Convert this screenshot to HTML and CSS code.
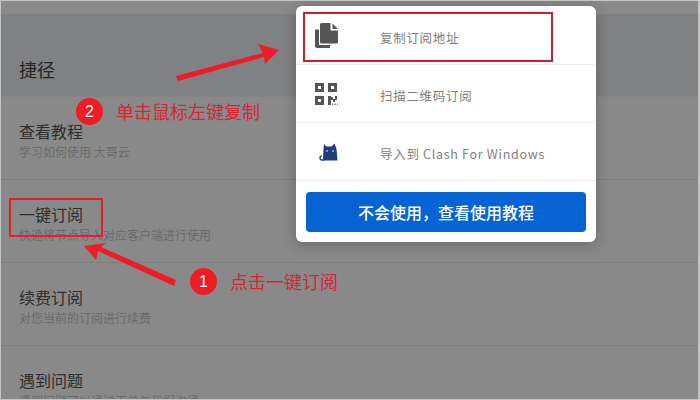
FILE: index.html
```html
<!doctype html>
<html>
  <head>
    <meta charset="utf-8">
    <meta name="viewport" content="width=device-width, user-scalable=no">
    <title>一键订阅</title>
    <link rel="stylesheet" href="styles.css">
  </head>
  <body>
    <div class="page">

      <div class="strip"></div>

      <div class="head">
        <h2 class="head-title">捷径</h2>
      </div>

      <div class="row">
        <p class="row-title">查看教程</p>
        <p class="row-sub">学习如何使用 大哥云</p>
      </div>
      <div class="row">
        <p class="row-title">一键订阅</p>
        <p class="row-sub">快速将节点导入对应客户端进行使用</p>
      </div>
      <div class="row">
        <p class="row-title">续费订阅</p>
        <p class="row-sub">对您当前的订阅进行续费</p>
      </div>
      <div class="row">
        <p class="row-title">遇到问题</p>
        <p class="row-sub">遇到问题可以通过工单与我们沟通</p>
      </div>

      <!-- subscribe popup -->
      <div class="popup">
        <div class="item">
          <span class="item-icon">
            <svg width="23" height="25" viewBox="0 0 23 25">
              <path fill="#555" d="M0 6.5 L4 6.5 L4 22 L15 22 L15 25 L2 25 Q0 25 0 23 Z"/>
              <path fill="#555" d="M6.5 0 L15.5 0 L15.5 7.5 L23 7.5 L23 19 Q23 20.5 21.5 20.5 L6.5 20.5 Q5 20.5 5 19 L5 1.5 Q5 0 6.5 0 Z"/>
              <path fill="#555" d="M17.5 0.5 L23 6 L17.5 6 Z"/>
            </svg>
          </span>
          <span class="item-text">复制订阅地址</span>
        </div>
        <div class="item">
          <span class="item-icon">
            <svg width="23" height="22" viewBox="0 0 23 22">
              <path fill="#555" fill-rule="evenodd" d="M0 0 H9 V9 H0 Z M3 3 V6 H6 V3 Z"/>
              <path fill="#555" fill-rule="evenodd" d="M13 0 H22 V9 H13 Z M16 3 V6 H19 V3 Z"/>
              <path fill="#555" fill-rule="evenodd" d="M0 13 H9 V22 H0 Z M3 16 V19 H6 V16 Z"/>
              <path fill="#555" d="M13 13 H16 V22 H13 Z M16 14 H18 V17 H16 Z M18 16 H20 V19 H18 Z M20 13 H22 V17 H20 Z"/>
              <path fill="#888" d="M17 20.5 H18.500 V22 H17 Z M19.500 20.500 H21 V22 H19.500 Z M22 20.500 H23 V22 H22 Z"/>
            </svg>
          </span>
          <span class="item-text">扫描二维码订阅</span>
        </div>
        <div class="item">
          <span class="item-icon">
            <svg class="cat" width="19" height="18" viewBox="0 0 19 18">
              <path fill="#1d3f78" d="M5 1 L7.500 3.500 H12.500 L15.500 0.500 L17.500 6 L18.500 17.500 H4 L4.500 6 Z"/>
              <path fill="none" stroke="#1d3f78" stroke-width="1.400" d="M5 17 H2.500 Q0.700 16.500 1 14.500 Q1.300 13 2.800 12.800"/>
              <circle cx="8" cy="8" r="1.100" fill="#8fb0dc"/>
              <circle cx="14" cy="8" r="1.100" fill="#8fb0dc"/>
            </svg>
          </span>
          <span class="item-text">导入到 Clash For Windows</span>
        </div>
        <div class="popup-foot">
          <button class="help-btn">不会使用，查看使用教程</button>
        </div>
      </div>

      <!-- red annotations drawn on top of the shot -->
      <div class="mark mark-copy"></div>
      <div class="mark mark-sub"></div>

      <svg class="arrows" width="700" height="400" viewBox="0 0 700 400">
        <path fill="#ee1c25" d="M176 76 L263 53 L258 44 L279 50 L265 64 L264 57 L178 81 Z"/>
        <path fill="#ee1c25" d="M176 280 L174 286 L98 251 L96 260 L84 246 L106 243 L101 247 Z"/>
      </svg>

      <div class="note note-two">
        <span class="badge">2</span>
        <span class="note-text">单击鼠标左键复制</span>
      </div>
      <div class="note note-one">
        <span class="badge">1</span>
        <span class="note-text">点击一键订阅</span>
      </div>

    </div>
  </body>
</html>
```

FILE: styles.css
```css
* {
  box-sizing: border-box;
}

html, body {
  margin: 0;
  padding: 0;
}

body {
  width: 700px;
  height: 400px;
  overflow: hidden;
  background-color: #898989;
  font-family: "Noto Sans CJK SC", "Noto Sans", sans-serif;
}

.page {
  position: relative;
  width: 700px;
  height: 400px;
  overflow: hidden;
  background-color: #898989;
  border: 1px solid #c4c4c4;
  border-width: 1px 2px 1px 1px;
}

.strip {
  height: 13px;
  background-color: #8a8a8a;
}

.head {
  height: 83px;
  padding: 43px 0 0 18px;
  background-color: #7f8183;
  border-bottom: 1px solid #858585;
}

.head-title {
  margin: 0;
  font-size: 18px;
  line-height: 24px;
  font-weight: 400;
  color: #262626;
}

.row {
  height: 83px;
  padding: 23px 0 0 18px;
  border-bottom: 1px solid #7f7f7f;
}

.row-title {
  margin: 0;
  font-size: 16px;
  line-height: 22px;
  color: #2e2e2e;
}

.row-sub {
  margin: 1px 0 0;
  font-size: 12px;
  line-height: 18px;
  color: #6b6b6b;
}

/* popup */
.popup {
  position: absolute;
  left: 295px;
  top: 5px;
  width: 300px;
  height: 236px;
  padding-top: 1px;
  background-color: #fff;
  border-radius: 6px;
  box-shadow: 0 2px 14px rgba(0, 0, 0, 0.25);
}

.item {
  display: flex;
  align-items: center;
  height: 58px;
  border-bottom: 1px solid #ececec;
}

.item-icon {
  display: flex;
  align-items: center;
  width: 84px;
  padding-left: 19px;
}

.cat {
  margin-left: 4px;
}

.item-text {
  margin-top: 4px;
  font-size: 12.500px;
  color: #808080;
  letter-spacing: 0.700px;
}

.popup-foot {
  padding: 11px 10px 0;
}

.help-btn {
  display: block;
  width: 280px;
  height: 40px;
  padding: 0 0 1px;
  border: 0;
  border-radius: 4px;
  background-color: #0563d2;
  color: #fff;
  font-family: inherit;
  font-size: 16px;
  font-weight: 500;
}

/* annotations */
.mark {
  position: absolute;
  border: 2px solid #c9202b;
}

.mark-copy {
  left: 302px;
  top: 11px;
  width: 250px;
  height: 50px;
}

.mark-sub {
  left: 8px;
  top: 197px;
  width: 94px;
  height: 39px;
  border-color: #e3202b;
}

.arrows {
  position: absolute;
  left: -1px;
  top: -1px;
}

.note {
  position: absolute;
  display: flex;
  align-items: center;
  gap: 13px;
}

.note-two {
  left: 75px;
  top: 97px;
}

.note-one {
  left: 189px;
  top: 267px;
  gap: 13px;
}

.badge {
  width: 27px;
  height: 27px;
  border-radius: 50%;
  background-color: #ee1c25;
  color: #fff;
  font-family: "Liberation Sans", sans-serif;
  font-size: 16px;
  line-height: 27px;
  text-align: center;
}

.note-text {
  font-size: 18px;
  line-height: 27px;
  color: #dc2433;
}
```
